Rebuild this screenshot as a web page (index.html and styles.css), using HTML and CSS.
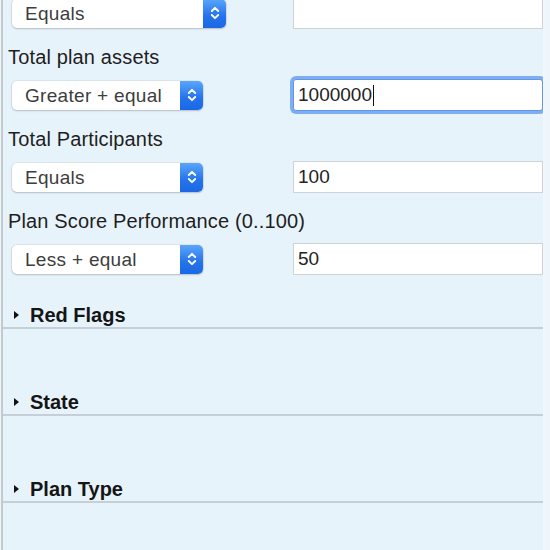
FILE: index.html
```html
<!DOCTYPE html>
<html>
<head>
<meta charset="utf-8">
<link rel="stylesheet" href="styles.css">
</head>
<body>
<div class="panel">
  <div class="row first">
    <div class="select wide"><span class="sel-text">Equals</span><span class="sel-btn"><svg width="10" height="18" viewBox="0 0 10 18"><path d="M1.8 7 L5 3.8 L8.2 7 M1.8 11 L5 14.2 L8.2 11" fill="none" stroke="#fff" stroke-width="1.9" stroke-linecap="round" stroke-linejoin="round"/></svg></span></div>
    <div class="field"></div>
  </div>

  <div class="label">Total plan assets</div>
  <div class="row">
    <div class="select"><span class="sel-text">Greater + equal</span><span class="sel-btn"><svg width="10" height="18" viewBox="0 0 10 18"><path d="M1.8 7 L5 3.8 L8.2 7 M1.8 11 L5 14.2 L8.2 11" fill="none" stroke="#fff" stroke-width="1.9" stroke-linecap="round" stroke-linejoin="round"/></svg></span></div>
    <div class="field focus">1000000<span class="caret"></span></div>
  </div>

  <div class="label">Total Participants</div>
  <div class="row">
    <div class="select"><span class="sel-text">Equals</span><span class="sel-btn"><svg width="10" height="18" viewBox="0 0 10 18"><path d="M1.8 7 L5 3.8 L8.2 7 M1.8 11 L5 14.2 L8.2 11" fill="none" stroke="#fff" stroke-width="1.9" stroke-linecap="round" stroke-linejoin="round"/></svg></span></div>
    <div class="field">100</div>
  </div>

  <div class="label">Plan Score Performance (0..100)</div>
  <div class="row">
    <div class="select"><span class="sel-text">Less + equal</span><span class="sel-btn"><svg width="10" height="18" viewBox="0 0 10 18"><path d="M1.8 7 L5 3.8 L8.2 7 M1.8 11 L5 14.2 L8.2 11" fill="none" stroke="#fff" stroke-width="1.9" stroke-linecap="round" stroke-linejoin="round"/></svg></span></div>
    <div class="field">50</div>
  </div>

  <div class="sections">
    <div class="section">
      <div class="sec-head"><span class="tri"></span>Red Flags</div>
      <div class="sec-body"></div>
    </div>
    <div class="section">
      <div class="sec-head"><span class="tri"></span>State</div>
      <div class="sec-body"></div>
    </div>
    <div class="section">
      <div class="sec-head"><span class="tri"></span>Plan Type</div>
      <div class="sec-body"></div>
    </div>
  </div>
</div>
</body>
</html>
```

FILE: styles.css
```css
html, body {
  margin: 0;
  padding: 0;
  background: #eef6fb;
  height: 550px;
  overflow: hidden;
}

body {
  font-family: "Liberation Sans", Arial, Helvetica, sans-serif;
}

.panel {
  margin-left: 1px;
  width: 544px;
  height: 560px;
  background: #e7f3fb;
  border-left: 2px solid #c4c9cd;
  border-right: 2px solid #f1f7fb;
  padding-left: 5px;
  box-sizing: border-box;
  overflow: hidden;
}

.row {
  display: grid;
  grid-template-columns: 285px 250px;
  align-items: center;
  height: 34px;
  margin-top: 9px;
}

.row.first {
  margin-top: -4px;
}

.label {
  font-size: 20px;
  line-height: 24px;
  letter-spacing: 0.15px;
  color: #1e1e1e;
  margin-top: 15px;
}

.select {
  margin-left: 4px;
  width: 191px;
  height: 29px;
  display: flex;
  background: #ffffff;
  border-radius: 5px;
  box-shadow: 0 1px 2px rgba(0, 0, 0, 0.18), 0 0 0 1px rgba(0, 0, 0, 0.05);
}

.select.wide {
  width: 214px;
}

.sel-text {
  flex: 1;
  font-size: 19px;
  line-height: 29px;
  color: #3d3d3d;
  padding-left: 13px;
  letter-spacing: 0.3px;
}

.sel-btn {
  width: 23px;
  display: flex;
  align-items: center;
  justify-content: center;
  border-radius: 0 5px 5px 0;
  background: linear-gradient(#5aa6fb, #2472ec 60%, #1c68e4);
}

.field {
  box-sizing: border-box;
  width: 250px;
  height: 32px;
  background: #ffffff;
  border: 1px solid #cfd3d6;
  font-size: 19px;
  line-height: 30px;
  color: #232323;
  padding-left: 4px;
  display: flex;
  align-items: center;
}

.field.focus {
  border: 1px solid #5f98ea;
  border-radius: 3px;
  box-shadow: 0 0 0 3px #7eaef1;
}

.caret {
  display: inline-block;
  width: 1px;
  height: 21px;
  background: #111;
  margin-left: 1px;
}

.sections {
  margin-top: 27px;
  margin-left: -5px;
}

.sec-head {
  height: 24px;
  font-size: 20px;
  font-weight: bold;
  line-height: 24px;
  color: #151515;
  padding-left: 11px;
  display: flex;
  align-items: center;
  border-bottom: 2px solid #c6cfd5;
}

.tri {
  width: 0;
  height: 0;
  border-top: 4.5px solid transparent;
  border-bottom: 4.5px solid transparent;
  border-left: 5.5px solid #111;
  margin-right: 11px;
  margin-top: -1px;
}

.sec-body {
  height: 61px;
}
```
